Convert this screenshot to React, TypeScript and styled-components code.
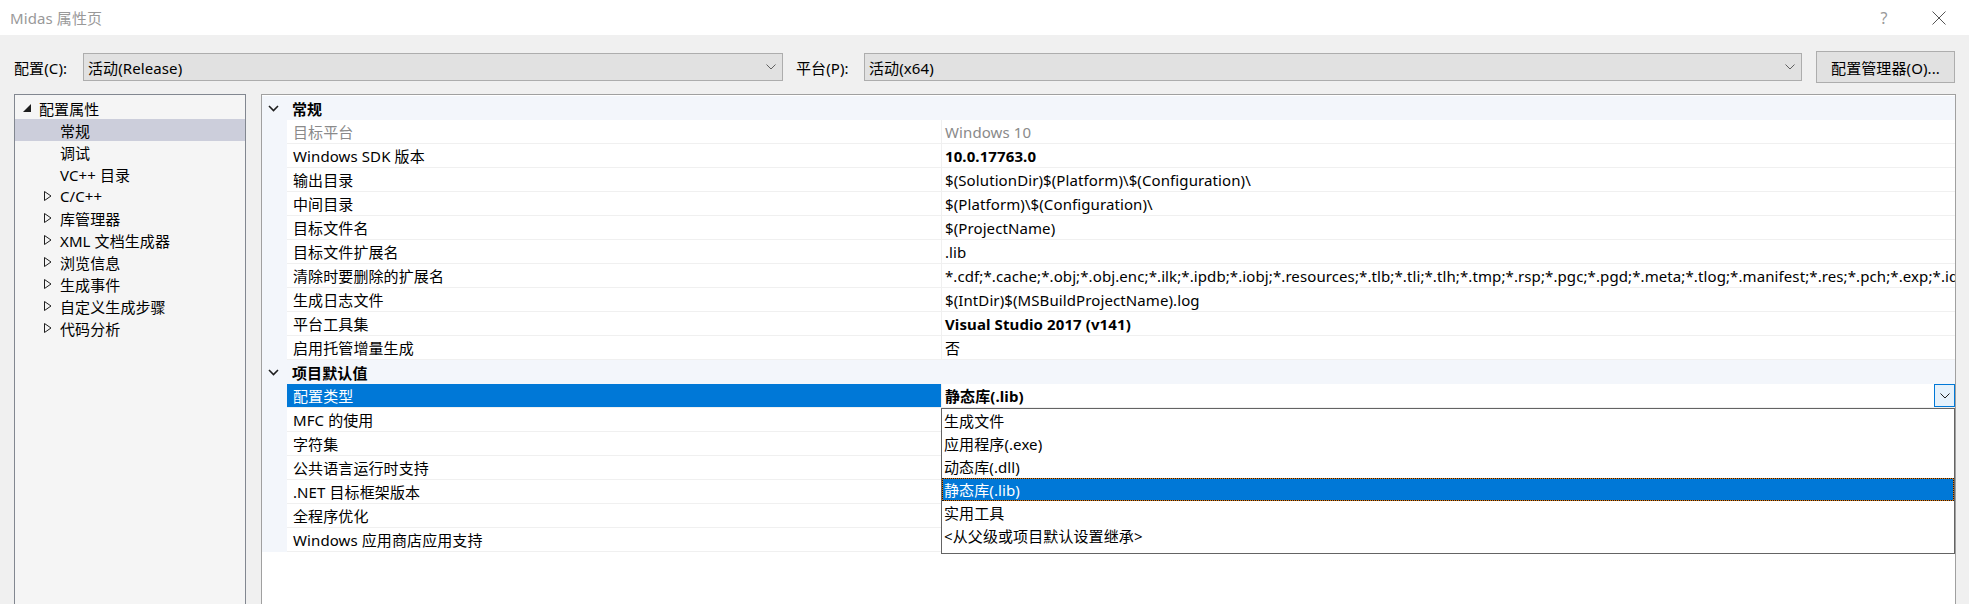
import { FC } from 'react'
import styled, { createGlobalStyle } from 'styled-components'

const GlobalStyle = createGlobalStyle`
  html, body {
    margin: 0;
    padding: 0;
    background: #f0f0f0;
  }
  body {
    font-family: 'Noto Sans', 'Noto Sans CJK SC', sans-serif;
    font-size: 15px;
    letter-spacing: 0.1px;
    color: #000;
  }
  * {
    box-sizing: border-box;
  }
`

const Window = styled.div`
  width: 1969px;
  height: 604px;
  display: flex;
  flex-direction: column;
  overflow: hidden;
  background: #f0f0f0;
`

const TitleBar = styled.div`
  height: 35px;
  flex: none;
  display: flex;
  align-items: center;
  padding: 0 7px 0 10px;
  background: #fff;
`

const Title = styled.span`
  flex: 1;
  color: #999;
  font-size: 15px;
`

const TitleButton = styled.div`
  width: 46px;
  height: 35px;
  display: flex;
  align-items: center;
  justify-content: center;
  color: #999;
  font-size: 16px;
  & + & {
    margin-left: 9px;
  }
`

const Toolbar = styled.div`
  height: 59px;
  flex: none;
  display: flex;
  align-items: center;
  padding: 5px 14px 0;
`

const Label = styled.span<{ $w: number; $ml?: number }>`
  flex: none;
  width: ${p => p.$w}px;
  margin-left: ${p => p.$ml ?? 0}px;
  white-space: nowrap;
`

const Combo = styled.div<{ $w: number }>`
  flex: none;
  width: ${p => p.$w}px;
  height: 28px;
  display: flex;
  align-items: center;
  padding: 0 6px 0 4px;
  background: #e1e1e1;
  border: 1px solid #adadad;
`

const ComboText = styled.span`
  flex: 1;
  white-space: nowrap;
`

const Button = styled.div`
  flex: none;
  width: 139px;
  height: 32px;
  margin-left: 14px;
  display: flex;
  align-items: center;
  justify-content: center;
  background: #e1e1e1;
  border: 1px solid #adadad;
`

const Main = styled.div`
  flex: 1;
  min-height: 0;
  display: flex;
  gap: 15px;
  padding-left: 14px;
`

const Tree = styled.div`
  flex: none;
  width: 232px;
  padding-top: 2px;
  background: #f5f5f5;
  border: 1px solid #828790;
  border-bottom: none;
`

const TreeRow = styled.div<{ $level: number; $selected?: boolean }>`
  height: 22px;
  display: flex;
  align-items: center;
  padding-left: ${p => 8 + p.$level * 21}px;
  background: ${p => (p.$selected ? '#cccedb' : 'transparent')};
  white-space: nowrap;
`

const Expander = styled.span`
  flex: none;
  width: 16px;
  display: flex;
  align-items: center;
`

const Grid = styled.div`
  flex: none;
  width: 1695px;
  padding-top: 1px;
  background: #fff;
  border: 1px solid #a0a0a0;
  border-bottom: none;
  overflow: hidden;
`

const Category = styled.div`
  background: #f3f6fb;
`

const CategoryHeader = styled.div`
  height: 24px;
  display: flex;
  align-items: center;
  padding-left: 6px;
  font-weight: 700;
`

const ChevronBox = styled.span`
  flex: none;
  width: 24px;
  display: flex;
  align-items: center;
`

const Rows = styled.div`
  margin-left: 25px;
  background: #fff;
`

const Row = styled.div`
  height: 24px;
  display: flex;
  border-bottom: 1px solid #f0f0f0;
`

const NameCell = styled.div<{ $selected?: boolean; $muted?: boolean }>`
  flex: none;
  width: 654px;
  display: flex;
  align-items: center;
  padding-left: 6px;
  white-space: nowrap;
  background: ${p => (p.$selected ? '#0078d7' : 'transparent')};
  color: ${p => (p.$selected ? '#fff' : p.$muted ? '#8a8a8a' : '#000')};
`

const ValueCell = styled.div`
  flex: 1;
  min-width: 0;
  position: relative;
  display: flex;
  align-items: center;
  border-left: 1px solid #f0f0f0;
`

const ValueText = styled.span<{ $bold?: boolean; $muted?: boolean }>`
  flex: 1;
  min-width: 0;
  padding-left: 3px;
  white-space: nowrap;
  overflow: hidden;
  font-weight: ${p => (p.$bold ? 700 : 400)};
  color: ${p => (p.$muted ? '#8a8a8a' : '#000')};
`

const DropButton = styled.div`
  flex: none;
  width: 21px;
  height: 23px;
  display: flex;
  align-items: center;
  justify-content: center;
  background: #e5f1fb;
  border: 1px solid #0078d7;
`

const DropList = styled.div`
  position: absolute;
  top: 24px;
  left: -1px;
  right: 0;
  z-index: 2;
  padding-bottom: 6px;
  background: #fff;
  border: 1px solid #646464;
`

const DropItem = styled.div<{ $selected?: boolean }>`
  height: 23px;
  display: flex;
  align-items: center;
  padding-left: 2px;
  white-space: nowrap;
  background: ${p => (p.$selected ? '#0078d7' : 'transparent')};
  color: ${p => (p.$selected ? '#fff' : '#000')};
  outline: ${p => (p.$selected ? '1px dotted #1a1a1a' : 'none')};
  outline-offset: -1px;
  box-shadow: ${p => (p.$selected ? 'inset 0 0 0 1px #e07a10' : 'none')};
`

const SmallChevron: FC<{ color?: string }> = ({ color = '#606060' }) => (
  <svg width='10' height='6' viewBox='0 0 10 6'>
    <path d='M0.5 0.5 L5 5 L9.5 0.5' fill='none' stroke={color} strokeWidth='1' />
  </svg>
)

const CategoryChevron: FC = () => (
  <svg width='11' height='7' viewBox='0 0 11 7'>
    <path d='M1 1 L5.5 5.5 L10 1' fill='none' stroke='#1e1e1e' strokeWidth='1.6' />
  </svg>
)

const ExpandedGlyph: FC = () => (
  <svg width='8' height='8' viewBox='0 0 8 8'>
    <polygon points='8,0 8,8 0,8' fill='#1e1e1e' />
  </svg>
)

const CollapsedGlyph: FC = () => (
  <svg width='8' height='10' viewBox='0 0 8 10'>
    <polygon points='0.5,0.5 7,5 0.5,9.5' fill='none' stroke='#1e1e1e' strokeWidth='1' />
  </svg>
)

const CloseIcon: FC = () => (
  <svg width='14' height='14' viewBox='0 0 14 14'>
    <path d='M0.5 0.5 L13.5 13.5 M13.5 0.5 L0.5 13.5' stroke='#555' strokeWidth='1' />
  </svg>
)

type TreeItem = { label: string; level: number; kind?: 'open' | 'closed'; selected?: boolean }

const treeItems: TreeItem[] = [
  { label: '配置属性', level: 0, kind: 'open' },
  { label: '常规', level: 1, selected: true },
  { label: '调试', level: 1 },
  { label: 'VC++ 目录', level: 1 },
  { label: 'C/C++', level: 1, kind: 'closed' },
  { label: '库管理器', level: 1, kind: 'closed' },
  { label: 'XML 文档生成器', level: 1, kind: 'closed' },
  { label: '浏览信息', level: 1, kind: 'closed' },
  { label: '生成事件', level: 1, kind: 'closed' },
  { label: '自定义生成步骤', level: 1, kind: 'closed' },
  { label: '代码分析', level: 1, kind: 'closed' },
]

type Prop = { name: string; value: string; bold?: boolean; muted?: boolean; selected?: boolean }

const general: Prop[] = [
  { name: '目标平台', value: 'Windows 10', muted: true },
  { name: 'Windows SDK 版本', value: '10.0.17763.0', bold: true },
  { name: '输出目录', value: '$(SolutionDir)$(Platform)\\$(Configuration)\\' },
  { name: '中间目录', value: '$(Platform)\\$(Configuration)\\' },
  { name: '目标文件名', value: '$(ProjectName)' },
  { name: '目标文件扩展名', value: '.lib' },
  {
    name: '清除时要删除的扩展名',
    value:
      '*.cdf;*.cache;*.obj;*.obj.enc;*.ilk;*.ipdb;*.iobj;*.resources;*.tlb;*.tli;*.tlh;*.tmp;*.rsp;*.pgc;*.pgd;*.meta;*.tlog;*.manifest;*.res;*.pch;*.exp;*.idb;*.rep;*.xdc;*.pdb;*_manifest.rc;*.bsc;*.sbr;*.xml;*.metagen;*.bi',
  },
  { name: '生成日志文件', value: '$(IntDir)$(MSBuildProjectName).log' },
  { name: '平台工具集', value: 'Visual Studio 2017 (v141)', bold: true },
  { name: '启用托管增量生成', value: '否' },
]

const defaults: Prop[] = [
  { name: '配置类型', value: '静态库(.lib)', bold: true, selected: true },
  { name: 'MFC 的使用', value: '' },
  { name: '字符集', value: '' },
  { name: '公共语言运行时支持', value: '' },
  { name: '.NET 目标框架版本', value: '' },
  { name: '全程序优化', value: '' },
  { name: 'Windows 应用商店应用支持', value: '' },
]

const options = ['生成文件', '应用程序(.exe)', '动态库(.dll)', '静态库(.lib)', '实用工具', '<从父级或项目默认设置继承>']

const PropRow: FC<{ prop: Prop }> = ({ prop }) => (
  <Row>
    <NameCell $selected={prop.selected} $muted={prop.muted}>
      {prop.name}
    </NameCell>
    <ValueCell>
      <ValueText $bold={prop.bold} $muted={prop.muted}>
        {prop.value}
      </ValueText>
      {prop.selected && (
        <>
          <DropButton>
            <SmallChevron color='#1e1e1e' />
          </DropButton>
          <DropList>
            {options.map(o => (
              <DropItem key={o} $selected={o === prop.value}>
                {o}
              </DropItem>
            ))}
          </DropList>
        </>
      )}
    </ValueCell>
  </Row>
)

const Section: FC<{ title: string; props: Prop[] }> = ({ title, props }) => (
  <Category>
    <CategoryHeader>
      <ChevronBox>
        <CategoryChevron />
      </ChevronBox>
      {title}
    </CategoryHeader>
    <Rows>
      {props.map(p => (
        <PropRow key={p.name} prop={p} />
      ))}
    </Rows>
  </Category>
)

export default function App() {
  return (
    <Window>
      <GlobalStyle />
      <TitleBar>
        <Title>Midas 属性页</Title>
        <TitleButton>?</TitleButton>
        <TitleButton>
          <CloseIcon />
        </TitleButton>
      </TitleBar>
      <Toolbar>
        <Label $w={69}>配置(C):</Label>
        <Combo $w={700}>
          <ComboText>活动(Release)</ComboText>
          <SmallChevron />
        </Combo>
        <Label $w={68} $ml={13}>
          平台(P):
        </Label>
        <Combo $w={938}>
          <ComboText>活动(x64)</ComboText>
          <SmallChevron />
        </Combo>
        <Button>配置管理器(O)...</Button>
      </Toolbar>
      <Main>
        <Tree>
          {treeItems.map(item => (
            <TreeRow key={item.label} $level={item.level} $selected={item.selected}>
              <Expander>
                {item.kind === 'open' && <ExpandedGlyph />}
                {item.kind === 'closed' && <CollapsedGlyph />}
              </Expander>
              {item.label}
            </TreeRow>
          ))}
        </Tree>
        <Grid>
          <Section title='常规' props={general} />
          <Section title='项目默认值' props={defaults} />
        </Grid>
      </Main>
    </Window>
  )
}
